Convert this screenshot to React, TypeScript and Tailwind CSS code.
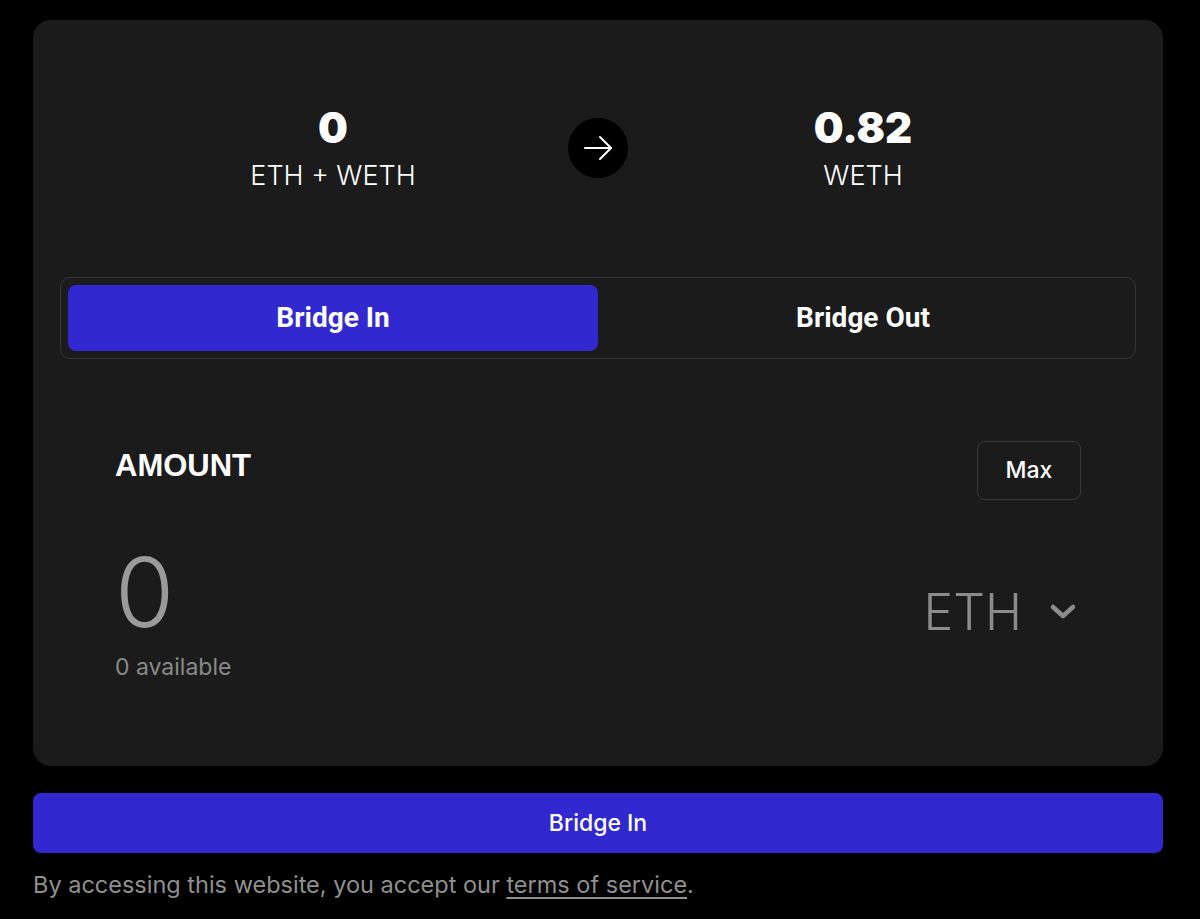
import React, { useState } from 'react';

const inter = { fontFamily: 'Inter, "Noto Sans", sans-serif' };

function ArrowGlyph() {
  return (
    <svg width="30" height="26" viewBox="0 0 30 26" fill="none" stroke="white" strokeWidth="2" strokeLinecap="round" strokeLinejoin="round">
      <path d="M2 13H28" />
      <path d="M17 2L28 13L17 24" />
    </svg>
  );
}

function Chevron() {
  return (
    <svg width="28" height="18" viewBox="0 0 28 18" fill="none" stroke="#8c8c8c" strokeWidth="4.5" strokeLinecap="round" strokeLinejoin="round">
      <path d="M4 4L14 13L24 4" />
    </svg>
  );
}

export default function App() {
  const [mode, setMode] = useState<'in' | 'out'>('in');

  return (
    <div className="min-h-[919px] w-full bg-black pl-[33px] pr-[37px] pt-[20px]" style={inter}>
      {/* main card */}
      <div className="rounded-[18px] bg-[#1b1b1b] px-[27px] pt-[87px] pb-[87px]">
        <div className="relative grid grid-cols-2 px-2">
          <div className="flex flex-col items-center">
            <div className="text-[42px] font-black leading-none text-white">0</div>
            <div className="mt-[13px] text-[27px] font-light leading-none text-white">ETH + WETH</div>
          </div>
          <div className="flex flex-col items-center">
            <div className="text-[42px] font-black leading-none text-white">0.82</div>
            <div className="mt-[13px] text-[27px] font-light leading-none text-white">WETH</div>
          </div>
          <div className="absolute left-1/2 top-[11px] flex h-[60px] w-[60px] -translate-x-1/2 items-center justify-center rounded-full bg-black">
            <ArrowGlyph />
          </div>
        </div>

        {/* tabs */}
        <div className="mt-[88px] grid grid-cols-2 rounded-[10px] border border-[#363636] p-[7px]" style={{ fontFamily: 'Roboto, sans-serif' }}>
          <button
            onClick={() => setMode('in')}
            className={mode === 'in' ? 'h-[66px] rounded-[8px] bg-[#3128cf] text-[28px] font-bold text-white' : 'h-[66px] rounded-[8px] text-[28px] font-bold text-white'}
          >
            Bridge In
          </button>
          <button
            onClick={() => setMode('out')}
            className={mode === 'out' ? 'h-[66px] rounded-[8px] bg-[#3128cf] text-[28px] font-bold text-white' : 'h-[66px] rounded-[8px] text-[28px] font-bold text-white'}
          >
            Bridge Out
          </button>
        </div>

        {/* amount */}
        <div className="mt-[82px] px-[55px]">
          <div className="flex items-center justify-between">
            <div className="-mt-2 text-[31px] font-bold text-white" style={{ fontFamily: '"Liberation Sans", Arial, sans-serif' }}>
              AMOUNT
            </div>
            <button className="h-[59px] w-[104px] rounded-[8px] border border-[#3a3a3a] text-[23px] font-medium text-white">
              Max
            </button>
          </div>

          <div className="mt-[44px] flex items-center justify-between">
            <div className="flex flex-col">
              <div className="text-[96px] font-light leading-none text-[#9a9a9a]">0</div>
              <div className="mt-4 text-[23px] leading-none text-[#8a8a8a]">0 available</div>
            </div>
            <div className="flex items-center gap-[27px] pr-[4px]">
              <span className="text-[50px] font-light leading-none text-[#8c8c8c]">ETH</span>
              <Chevron />
            </div>
          </div>
        </div>
      </div>

      <button className="mt-[27px] h-[60px] w-full rounded-[8px] bg-[#3128cf] text-[23px] font-medium text-white">
        {mode === 'in' ? 'Bridge In' : 'Bridge Out'}
      </button>

      <p className="mt-5 text-[23.5px] leading-none text-[#909090]">
        By accessing this website, you accept our <a className="underline underline-offset-4">terms of service</a>.
      </p>
    </div>
  );
}
